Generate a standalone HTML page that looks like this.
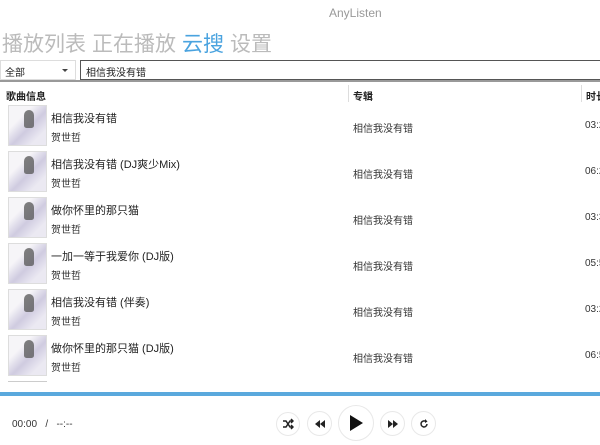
<!DOCTYPE html>
<html><head><meta charset="utf-8"><style>
*{margin:0;padding:0;box-sizing:border-box}
body{width:600px;height:445px;overflow:hidden;background:#fff;font-family:"Liberation Sans","Noto Sans CJK SC",sans-serif;position:relative;color:#222}
.abs{position:absolute;white-space:nowrap}
.title{left:329px;top:6px;font-size:12px;color:#999}
.nav{left:2px;top:28px;font-size:21px;color:#bbb;letter-spacing:0px;white-space:nowrap}
.nav span{margin-right:6px}
.nav .on{color:#4aa3df}
.sel{left:0;top:60px;width:76px;height:20px;border:1px solid #ddd;font-size:10px;padding:3px 4px}
.sel i{position:absolute;right:7px;top:8px;border:3px solid transparent;border-top:3px solid #444}
.inp{left:80px;top:60px;width:530px;height:20px;border:1px solid #555;font-size:10px;padding:3px 5px}
.hline{left:0;top:80px;width:600px;height:2px;background:#999}
.hd{top:88px;font-size:10px;font-weight:bold}
.vs{top:85px;width:1px;height:17px;background:#ddd}
.row{left:0;width:600px;height:46px}
.th{left:8px;top:2px;width:39px;height:41px;border:1px solid #ddd;background:linear-gradient(135deg,#f6f5f8 30%,#cfcbe0 55%,#ebe9f2 80%)}
.th:after{content:"";position:absolute;left:15px;top:4px;width:10px;height:18px;border-radius:6px 6px 3px 3px;background:#555;opacity:.75}
.t1{left:51px;top:7px;font-size:11px}
.t2{left:51px;top:26px;font-size:10px;color:#333}
.al{left:353px;top:17px;font-size:10px;color:#333}
.du{left:585px;top:17px;font-size:10px;color:#333}
.bar{left:0;top:392px;width:600px;height:4px;background:#5aa9dd}
.tm{left:12px;top:419px;font-size:10px;color:#333}
.btn{border:1px solid #e8e8e8;border-radius:50%;display:flex;align-items:center;justify-content:center;background:#fff}
</style></head><body>
<div class="abs title">AnyListen</div>
<div class="abs nav"><span>播放列表</span><span>正在播放</span><span class="on">云搜</span><span>设置</span></div>
<div class="abs sel">全部<i></i></div>
<div class="abs inp">相信我没有错</div>
<div class="abs hline"></div>
<div class="abs hd" style="left:6px">歌曲信息</div>
<div class="abs vs" style="left:348px"></div>
<div class="abs hd" style="left:353px">专辑</div>
<div class="abs vs" style="left:581px"></div>
<div class="abs hd" style="left:586px">时长</div>

<div class="abs row" style="top:103px"><div class="abs th"></div><div class="abs t1">相信我没有错</div><div class="abs t2">贺世哲</div><div class="abs al">相信我没有错</div><div class="abs du">03:2</div></div>
<div class="abs row" style="top:149px"><div class="abs th"></div><div class="abs t1">相信我没有错 (DJ爽少Mix)</div><div class="abs t2">贺世哲</div><div class="abs al">相信我没有错</div><div class="abs du">06:2</div></div>
<div class="abs row" style="top:195px"><div class="abs th"></div><div class="abs t1">做你怀里的那只猫</div><div class="abs t2">贺世哲</div><div class="abs al">相信我没有错</div><div class="abs du">03:3</div></div>
<div class="abs row" style="top:241px"><div class="abs th"></div><div class="abs t1">一加一等于我爱你 (DJ版)</div><div class="abs t2">贺世哲</div><div class="abs al">相信我没有错</div><div class="abs du">05:5</div></div>
<div class="abs row" style="top:287px"><div class="abs th"></div><div class="abs t1">相信我没有错 (伴奏)</div><div class="abs t2">贺世哲</div><div class="abs al">相信我没有错</div><div class="abs du">03:2</div></div>
<div class="abs row" style="top:333px"><div class="abs th"></div><div class="abs t1">做你怀里的那只猫 (DJ版)</div><div class="abs t2">贺世哲</div><div class="abs al">相信我没有错</div><div class="abs du">06:5</div></div>
<div class="abs" style="left:8px;top:381px;width:39px;height:3px;border-top:1px solid #ccc"></div>

<div class="abs bar"></div>
<div class="abs tm">00:00 &nbsp;&nbsp;/&nbsp;&nbsp; --:--</div>
<div class="abs btn" style="left:276px;top:412px;width:24px;height:24px"><svg width="12" height="12" viewBox="0 0 12 12"><path d="M1 3h3l4 6h3M1 9h3l4-6h3M9 1l2 2-2 2M9 7l2 2-2 2" stroke="#222" stroke-width="1.5" fill="none"/></svg></div>
<div class="abs btn" style="left:307px;top:411px;width:25px;height:25px"><svg width="10" height="8" viewBox="0 0 10 8"><path d="M5 0L0 4l5 4zM10 0L5 4l5 4z" fill="#222"/></svg></div>
<div class="abs btn" style="left:338px;top:405px;width:36px;height:36px"><svg width="14" height="16" viewBox="0 0 14 16"><path d="M1 0L14 8 1 16z" fill="#111"/></svg></div>
<div class="abs btn" style="left:380px;top:411px;width:25px;height:25px"><svg width="10" height="8" viewBox="0 0 10 8"><path d="M0 0l5 4-5 4zM5 0l5 4-5 4z" fill="#222"/></svg></div>
<div class="abs btn" style="left:411px;top:411px;width:25px;height:25px"><svg width="10" height="10" viewBox="0 0 10 10"><path d="M8 5a3 3 0 1 1-1-2.3" stroke="#222" stroke-width="1.5" fill="none"/><path d="M6 0l2.5 2.5L6 4z" fill="#222"/></svg></div>
</body></html>
